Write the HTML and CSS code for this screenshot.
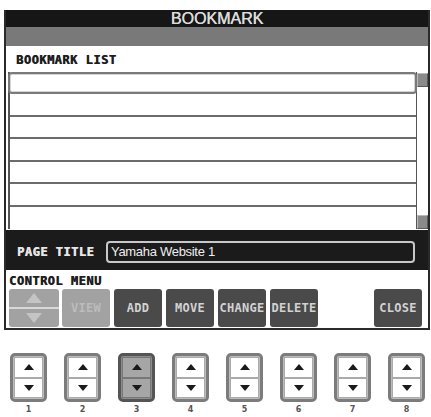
FILE: index.html
```html
<!DOCTYPE html>
<html>
  <head>
    <title>Bookmark</title>
    <link rel="stylesheet" href="styles.css">
  </head>
  <body>
    <div class="screen">
      <div class="titlebar">BOOKMARK</div>
      <div class="band"></div>

      <div class="listpanel">
        <div class="label">BOOKMARK LIST</div>
        <div class="list">
          <div class="rows">
            <div class="row selected"></div>
            <div class="row"></div>
            <div class="row"></div>
            <div class="row"></div>
            <div class="row"></div>
            <div class="row"></div>
            <div class="row last"></div>
          </div>
          <div class="scroll">
            <div class="thumb"></div>
            <div class="thumb"></div>
          </div>
        </div>
      </div>

      <div class="titlepanel">
        <span class="label light">PAGE TITLE</span>
        <div class="field">Yamaha Website 1</div>
      </div>

      <div class="menu">
        <div class="label">CONTROL MENU</div>
        <div class="buttons">
          <div class="btn updown off">
            <span class="half"><i class="tri up"></i></span>
            <span class="half"><i class="tri down"></i></span>
          </div>
          <div class="btn off">VIEW</div>
          <div class="btn">ADD</div>
          <div class="btn">MOVE</div>
          <div class="btn">CHANGE</div>
          <div class="btn">DELETE</div>
          <div class="btn empty"></div>
          <div class="btn">CLOSE</div>
        </div>
      </div>
    </div>

    <!-- physical buttons under the screen -->
    <div class="keys">
      <div class="key"><div class="pad"><span class="up"></span><span class="dn"></span></div><b>1</b></div>
      <div class="key"><div class="pad"><span class="up"></span><span class="dn"></span></div><b>2</b></div>
      <div class="key"><div class="pad lit"><span class="up"></span><span class="dn"></span></div><b>3</b></div>
      <div class="key"><div class="pad"><span class="up"></span><span class="dn"></span></div><b>4</b></div>
      <div class="key"><div class="pad"><span class="up"></span><span class="dn"></span></div><b>5</b></div>
      <div class="key"><div class="pad"><span class="up"></span><span class="dn"></span></div><b>6</b></div>
      <div class="key"><div class="pad"><span class="up"></span><span class="dn"></span></div><b>7</b></div>
      <div class="key"><div class="pad"><span class="up"></span><span class="dn"></span></div><b>8</b></div>
    </div>
  </body>
</html>
```

FILE: styles.css
```css
body {
  margin: 0;
  background: #fff;
  font-family: "Liberation Sans", Arial, sans-serif;
}
.screen {
  margin: 10px 0 0 4px;
  width: 426px;
  box-sizing: border-box;
  border-left: 2px solid #2a2a2a;
  border-right: 2px solid #2a2a2a;
}
.titlebar {
  height: 17px;
  line-height: 18px;
  background: #161616;
  color: #dcdcdc;
  font-size: 16px;
  text-align: center;
  text-shadow: 0.4px 0 0 #dcdcdc;
}
.band {
  height: 19px;
  background: #797979;
}
.label {
  font-family: "DejaVu Sans Mono", monospace;
  font-weight: bold;
  font-size: 12px;
  letter-spacing: 0.5px;
  line-height: 14px;
  color: #1e1e1e;
  text-shadow: 0.5px 0 0 #1e1e1e;
}
.label.light {
  color: #e6e6e6;
  text-shadow: 0.5px 0 0 #e6e6e6;
}

/* bookmark list */
.listpanel {
  height: 184px;
  box-sizing: border-box;
  padding: 7px 0 1px 2px;
  background: #fff;
}
.listpanel .label {
  padding-left: 8px;
  margin-bottom: 5px;
}
.list {
  display: flex;
  height: 157px;
}
.rows {
  width: 409px;
  box-sizing: border-box;
  display: grid;
  grid-template-rows: repeat(7, 1fr);
  border-left: 2px solid #555;
  border-right: 1px solid #555;
}
.row {
  border-bottom: 2px solid #6c6c6c;
}
.row.last {
  border-bottom: none;
}
.row.selected {
  border: 2px solid #7a7a7a;
  border-radius: 4px;
  box-shadow: inset 0 0 0 1px #d4d4d4;
  margin: 0 -1px 0 -2px;
}
.scroll {
  width: 11px;
  display: flex;
  flex-direction: column;
  justify-content: space-between;
  padding: 1px 0 0;
}
.thumb {
  height: 12px;
  background: #8a8a8a;
  border: 1px solid #5a5a5a;
  border-top-color: #bbb;
  border-left-color: #bbb;
}

/* page title */
.titlepanel {
  height: 40px;
  box-sizing: border-box;
  padding: 3px 13px 0 11px;
  display: flex;
  align-items: center;
  background: #1b1b1b;
}
.titlepanel .label {
  flex: 1;
}
.field {
  width: 309px;
  height: 22px;
  box-sizing: border-box;
  border: 2px solid #c8c8c8;
  border-radius: 4px;
  padding-left: 3px;
  color: #eee;
  font-size: 13px;
  line-height: 18px;
  letter-spacing: -0.3px;
}

/* control menu */
.menu {
  height: 60px;
  box-sizing: border-box;
  padding: 4px 0 0 3px;
  background: #fff;
  border-bottom: 2px solid #2a2a2a;
}
.buttons {
  display: flex;
  margin-top: 1px;
}
.btn {
  width: 48px;
  height: 38px;
  margin-right: 4px;
  border-radius: 3px;
  background: #4a4a4a;
  color: #d2d2d2;
  font-family: "DejaVu Sans Mono", monospace;
  font-weight: bold;
  font-size: 12px;
  letter-spacing: 0.3px;
  display: flex;
  align-items: center;
  justify-content: center;
}
.btn.off {
  background: #a2a2a2;
  color: #bcbcbc;
}
.btn.empty {
  background: none;
}
.btn.updown {
  width: 50px;
  margin-right: 3px;
  flex-direction: column;
}
.half {
  flex: 1;
  width: 100%;
  display: flex;
  align-items: center;
  justify-content: center;
}
.half + .half {
  border-top: 2px solid #d8d8d8;
}
.tri {
  width: 0;
  height: 0;
  border-left: 8px solid transparent;
  border-right: 8px solid transparent;
}
.tri.up {
  border-bottom: 10px solid #c4c4c4;
}
.tri.down {
  border-top: 10px solid #c4c4c4;
}

/* panel keys */
.keys {
  display: flex;
  gap: 17px;
  margin: 23px 0 0 10px;
}
.key {
  width: 37px;
  display: flex;
  flex-direction: column;
  align-items: center;
}
.pad {
  width: 37px;
  height: 49px;
  box-sizing: border-box;
  border: 3px solid #7c7c7c;
  border-radius: 5px;
  background: #bdbdbd;
  display: flex;
  flex-direction: column;
  justify-content: space-between;
  padding: 1px;
}
.pad span {
  height: 19px;
  background: #fff;
  border: 1px solid #aaa;
  display: flex;
  align-items: center;
  justify-content: center;
}
.pad span::after {
  content: "";
  border-left: 5px solid transparent;
  border-right: 5px solid transparent;
}
.pad .up::after {
  border-bottom: 6px solid #1a1a1a;
}
.pad .dn::after {
  border-top: 6px solid #1a1a1a;
}
.pad.lit {
  border-color: #555;
  background: #8c8c8c;
}
.pad.lit span {
  background: #a6a6a6;
  border-color: #777;
}
.key b {
  font-family: "DejaVu Sans", sans-serif;
  font-size: 8px;
  font-weight: bold;
  color: #555;
  line-height: 12px;
  margin-top: 2px;
}
```
